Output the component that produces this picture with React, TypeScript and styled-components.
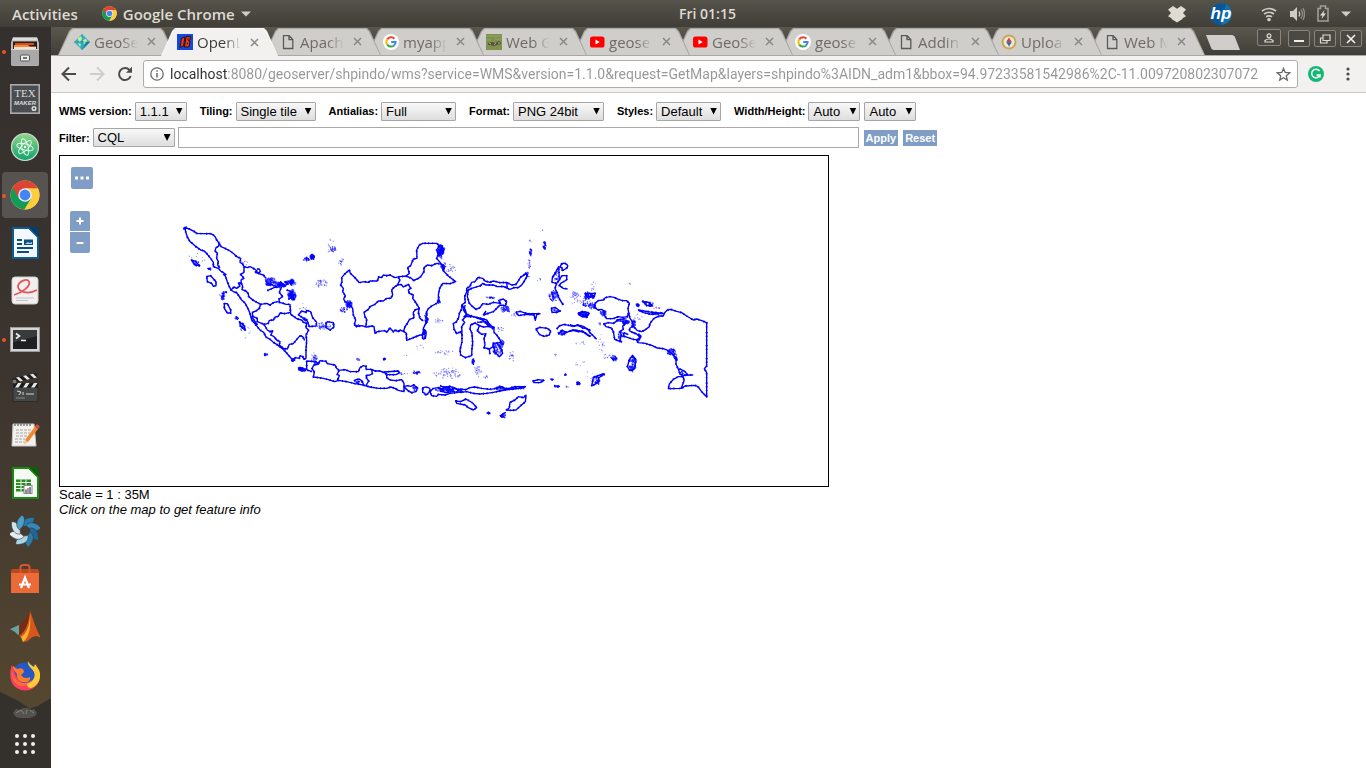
import React from "react";
import styled, { createGlobalStyle, css } from "styled-components";

const UI_FONT = '"Open Sans", "Noto Sans", sans-serif';
const PAGE_FONT = '"Liberation Sans", Arial, sans-serif';

const GlobalStyle = createGlobalStyle`
  *, *::before, *::after { box-sizing: border-box; }
  body { margin: 0; background: #fff; color: #000; font-family: ${PAGE_FONT}; font-size: 13px; }
  button { border: 0; padding: 0; background: none; color: inherit; font: inherit; }
  svg { display: block; flex: none; }
`;

/* ---------- desktop shell ---------- */

const Desktop = styled.div`
  display: flex;
  flex-direction: column;
  min-height: 100vh;
`;

const TopBar = styled.header`
  display: grid;
  grid-template-columns: 1fr auto 1fr;
  align-items: center;
  height: 27px;
  padding: 0 15px 0 12px;
  background: linear-gradient(#56534a, #403e38);
  color: #dfdbd2;
  font: 600 15px/20px ${UI_FONT};
`;

const BarGroup = styled.div<{ $end?: boolean }>`
  display: flex;
  align-items: center;
  gap: 24px;
  justify-content: ${(p) => (p.$end ? "flex-end" : "flex-start")};
`;

const BarButton = styled.button`
  display: flex;
  align-items: center;
  gap: 6px;
`;

const Clock = styled(BarButton)`
  margin-left: 52px;
  font-size: 14px;
`;

const Tray = styled.div`
  display: flex;
  align-items: center;
  gap: 12px;
  margin-left: 5px;
`;

const Workspace = styled.div`
  display: flex;
  flex: 1;
`;

const Dock = styled.nav`
  position: relative;
  display: flex;
  flex-direction: column;
  align-items: center;
  width: 51px;
  padding-right: 1px;
  flex: none;
  background: linear-gradient(#34302d, #3b342f 45%, #4b3f30 75%, #54462f 90%);
  &::after {
    content: "";
    position: absolute;
    inset: auto 0 0 0;
    height: 76px;
    background: #34312d;
    clip-path: polygon(0 0, 34% 11%, 58% 22%, 75% 18%, 100% 8%, 100% 100%, 0 100%);
  }
`;

const DockButton = styled.button<{ $active?: boolean; $running?: boolean }>`
  position: relative;
  display: grid;
  place-items: center;
  width: 46px;
  height: 46px;
  margin: 1px 0;
  border-radius: 4px;
  background: ${(p) => (p.$active ? "#575350" : "transparent")};
  ${(p) =>
    p.$running &&
    css`
      &::before {
        content: "";
        position: absolute;
        left: 0;
        top: 22px;
        width: 4px;
        height: 4px;
        border-radius: 2px;
        background: #e95420;
      }
    `}
`;

const DockFoot = styled.div`
  position: relative;
  z-index: 1;
  display: flex;
  flex-direction: column;
  align-items: center;
  gap: 14px;
  padding-top: 8px;
`;

/* ---------- browser window ---------- */

const Browser = styled.div`
  flex: 1;
  min-width: 0;
  display: flex;
  flex-direction: column;
  background: #fff;
`;

const TabStrip = styled.div`
  display: flex;
  align-items: flex-start;
  height: 29px;
  padding: 0 4px 0 7px;
  background: linear-gradient(#5a574d, #403e39);
  border-bottom: 1px solid #a9a8a6;
`;

const TabList = styled.div`
  display: flex;
  flex: 0 1 1133px;
  min-width: 0;
  margin-right: 15px;
`;

const TabShape = styled.div<{ $active?: boolean; $level: number }>`
  position: relative;
  z-index: ${(p) => (p.$active ? 20 : p.$level)};
  display: flex;
  align-items: center;
  flex: 0 1 117px;
  height: ${(p) => (p.$active ? 29 : 28)}px;
  min-width: 0;
  margin-right: -14px;
  padding: 1px 19px 0 16px;
  color: ${(p) => (p.$active ? "#3c3c3c" : "#6d6a67")};
  &::before,
  &::after {
    content: "";
    position: absolute;
    z-index: -1;
    inset: 1px 0 0 0;
    background: ${(p) => (p.$active ? "#f8f7f6" : "#a9a7a4")};
    clip-path: polygon(0 100%, 11px 3px, 14px 0, calc(100% - 14px) 0, calc(100% - 11px) 3px, 100% 100%);
  }
  &::after {
    inset: 2px 1px 0 1px;
    background: ${(p) => (p.$active ? "#f2f1f0" : "#d0cecb")};
  }
`;

const TabTitle = styled.button`
  flex: 1;
  min-width: 0;
  display: flex;
  align-items: center;
  gap: 4px;
  font: 15px/20px ${UI_FONT};
  white-space: nowrap;
`;

const FadeText = styled.span`
  flex: 1;
  min-width: 0;
  text-align: left;
  overflow: hidden;
  mask-image: linear-gradient(to right, #000 60%, transparent 98%);
`;

const TabClose = styled.button`
  margin-left: 8px;
  color: #8b8987;
`;

const NewTab = styled.button`
  width: 34px;
  height: 15px;
  margin-top: 8px;
  background: #d0cecb;
  clip-path: polygon(0 0, 78% 0, 84% 8%, 100% 100%, 22% 100%, 16% 92%);
`;

const WindowButtons = styled.div`
  display: flex;
  align-items: flex-start;
  gap: 4px;
  margin-left: auto;
`;

const WindowButton = styled.button<{ $profile?: boolean }>`
  display: grid;
  place-items: center;
  width: ${(p) => (p.$profile ? 24 : 22)}px;
  height: 17px;
  margin: ${(p) => (p.$profile ? "2px 3px 0 0" : "3px 0 0 0")};
  border: 1px solid #88857c;
  border-radius: 2px;
  background: #4b4943;
`;

const NavBar = styled.div`
  display: flex;
  align-items: center;
  gap: 12px;
  height: 37px;
  padding: 0 10px;
  background: #f2f1f0;
  border-bottom: 1px solid #cccbca;
  color: #4b4b4b;
`;

const NavButton = styled.button<{ $spaced?: boolean }>`
  width: 16px;
  height: 16px;
  margin-left: ${(p) => (p.$spaced ? 4 : 0)}px;
`;

const Omnibox = styled.div`
  display: flex;
  align-items: center;
  gap: 6px;
  flex: 1;
  min-width: 0;
  height: 28px;
  margin: 0 -2px;
  padding: 0 6px;
  background: #fff;
  border: 1px solid #aeadab;
  border-radius: 3px;
  color: #6a6a6a;
`;

const UrlInput = styled.input`
  flex: 1;
  min-width: 0;
  height: 22px;
  border: 0;
  padding: 0;
  outline: 0;
  font: 14px/22px Roboto, ${UI_FONT};
  color: transparent;
  background: linear-gradient(to right, #2f2f2f 58px, #969696 58px);
  background-clip: text;
`;

/* ---------- WMS preview page ---------- */

const Preview = styled.main`
  padding: 8px;
`;

const OptionRow = styled.div`
  display: flex;
  flex-wrap: wrap;
  align-items: center;
  gap: 4px 13px;
  min-height: 20px;
`;

const FilterRow = styled.div`
  display: flex;
  align-items: center;
  gap: 3px;
  height: 21px;
  margin: 6px 0 7px;
`;

const Field = styled.div`
  display: flex;
  align-items: center;
  gap: 3px;
`;

const Label = styled.label`
  font-size: 11px;
  font-weight: bold;
  line-height: 16px;
  white-space: nowrap;
`;

const SelectBox = styled.span<{ $w: number }>`
  position: relative;
  display: block;
  width: ${(p) => p.$w}px;
  & + & { margin-left: 1px; }
  &::after {
    content: "";
    position: absolute;
    right: 4px;
    top: 6px;
    width: 7px;
    height: 7px;
    background: #000;
    clip-path: polygon(0 0, 100% 0, 50% 100%);
    pointer-events: none;
  }
  select {
    appearance: none;
    display: block;
    width: 100%;
    height: 19px;
    padding: 0 0 0 4px;
    border: 1px solid #a6a6a6;
    border-radius: 1px;
    background: linear-gradient(#f8f8f8, #dedede);
    color: #000;
    font: 13px/17px ${PAGE_FONT};
  }
`;

const FilterInput = styled.input`
  flex: 0 1 681px;
  min-width: 0;
  height: 21px;
  padding: 1px 4px;
  border: 1px solid #a9a9a9;
  font: 13px ${PAGE_FONT};
`;

const ActionButton = styled.button`
  height: 16px;
  margin-left: 2px;
  padding: 0 2px;
  background: #7f9dc5;
  color: #fff;
  font: bold 11px/16px ${PAGE_FONT};
`;

const MapFrame = styled.div`
  position: relative;
  max-width: 770px;
  border: 1px solid #000;
  svg { width: 100%; height: auto; }
`;

const MapTools = styled.div`
  position: absolute;
  left: 10px;
  top: 11px;
  display: flex;
  flex-direction: column;
  gap: 1px;
`;

const MapButton = styled.button<{ $menu?: boolean; $edge?: "top" | "bottom" }>`
  display: grid;
  place-items: center;
  width: ${(p) => (p.$menu ? 22 : 20)}px;
  height: ${(p) => (p.$menu ? 22 : p.$edge === "top" ? 20 : 21)}px;
  margin: ${(p) => (p.$menu ? "0 0 21px 1px" : "0")};
  border-radius: ${(p) => (p.$edge === "top" ? "2px 2px 0 0" : p.$edge === "bottom" ? "0 0 2px 2px" : "2px")};
  background: #7f9dc5;
  svg { width: 16px; height: 16px; }
`;

const Status = styled.div<{ $italic?: boolean }>`
  font-size: 13px;
  line-height: 15px;
  font-style: ${(p) => (p.$italic ? "italic" : "normal")};
`;

/* ---------- favicons ---------- */

const PageIcon = () => (
  <svg width="16" height="16" viewBox="0 0 16 16" fill="none" stroke="#5c5a58" strokeWidth="1.3">
    <path d="M3.5 1.7h5.6l3.7 3.8v9H3.5zM9 1.7v4h3.8" />
  </svg>
);

const GoogleIcon = () => (
  <svg width="16" height="16" viewBox="0 0 16 16">
    <circle cx="8" cy="8" r="8" fill="#fff" />
    <g fill="none" strokeWidth="2">
      <path d="M4.2 5.4A4.6 4.6 0 0 1 11.4 4.7" stroke="#ea4335" />
      <path d="M4.2 5.4A4.7 4.7 0 0 0 4.2 10.6" stroke="#fbbc05" />
      <path d="M4.2 10.6A4.6 4.6 0 0 0 11 11.5" stroke="#34a853" />
      <path d="M11 11.5A4.6 4.6 0 0 0 12.6 8H8.2" stroke="#4285f4" />
    </g>
  </svg>
);

const YoutubeIcon = () => (
  <svg width="16" height="16" viewBox="0 0 16 16">
    <rect x="1" y="2.5" width="14.5" height="11" rx="2.6" fill="#f00" />
    <path d="M6.5 5.6v4.8L10.7 8z" fill="#fff" />
  </svg>
);

const GeoServerIcon = () => (
  <svg width="16" height="16" viewBox="0 0 16 16">
    <path d="M8 0l8 8-8 8-8-8z" fill="#35b3c6" />
    <path d="M3.500 4.500l4-2.500 1 3-3 3zM9 6l3-1 2 4-4 1zM4 9l3 1-1 3z" fill="#d4ec8f" />
    <path d="M8 0v16M0 8h16" stroke="#1788a8" strokeWidth=".5" />
    <path d="M8 16l8-8h-4z" fill="#128099" />
  </svg>
);

const OpenLayersIcon = () => (
  <svg width="16" height="16" viewBox="0 0 16 16">
    <rect width="16" height="16" fill="#1447e0" />
    <path d="M4.500 4l3.500-1-1.500 9L3 13.500zM9 2.500h4.500L13 6l-1.500.5L13 7.500l-1 5.500H7.500z" fill="#f4340f" stroke="#111" strokeWidth=".9" />
    <path d="M10.500 5h1M10 9.500h1" stroke="#111" strokeWidth="1.300" />
  </svg>
);

const PhotoIcon = () => (
  <svg width="16" height="16" viewBox="0 0 16 16">
    <rect width="16" height="16" fill="#7e9150" />
    <path d="M0 2h16M0 6h5m4-1h7" stroke="#8d9f5c" strokeWidth="1.500" />
    <path d="M2 9l4-1 3 1 4-2 2 2v1l-4 1-3 1-4-1H2z" fill="#5a5434" />
    <path d="M3 9l2 1m3 1l2-2m2 0h2" stroke="#b0a884" />
  </svg>
);

const CompassIcon = () => (
  <svg width="16" height="16" viewBox="0 0 16 16">
    <circle cx="8" cy="8" r="7.500" fill="#cfa55a" />
    <circle cx="8" cy="8" r="5.500" fill="#efe6d6" />
    <circle cx="8" cy="8" r="2.500" fill="#4a78b8" />
    <path d="M8 3.500l2 3.500H6z" fill="#d3452d" />
    <path d="M8 13l1.500-4h-3z" fill="#2f62ad" />
    <circle cx="8" cy="7.500" r="1.200" fill="#d3452d" />
  </svg>
);

const ChromeIcon = ({ size }: { size: number }) => (
  <svg width={size} height={size} viewBox="0 0 30 30">
    <circle cx="15" cy="15" r="14.500" fill="#ffcd40" />
    <path d="M15 15L2.500 7.700A14.500 14.500 0 0 0 14.500 29.500L21.500 18.500z" fill="#109d58" />
    <path d="M2.600 7.500A14.500 14.500 0 0 1 28 8.500H15L9 18.500z" fill="#db4437" />
    <path d="M15 8.500h13A14.500 14.500 0 0 1 14.500 29.500l6.500-11z" fill="#ffcd40" />
    <circle cx="15" cy="15" r="6.800" fill="#f1f1f1" />
    <circle cx="15" cy="15" r="5.400" fill="#4285f4" />
  </svg>
);

const CloseIcon = () => (
  <svg width="9" height="9" viewBox="0 0 9 9" stroke="currentColor" strokeWidth="1.500">
    <path d="M1 1l7 7M8 1L1 8" />
  </svg>
);

const CaretIcon = () => (
  <svg width="10" height="6" viewBox="0 0 10 6" fill="#cfccc4">
    <path d="M0 .5h10L5 5.500z" />
  </svg>
);

/* ---------- dock icons ---------- */

const petalColors = ["#2679ad", "#3489ba", "#1f6798", "#2b7bab", "#a9d4e8", "#e2edf2", "#cfe3ee", "#4b9dc8"];

const dockItems: { name: string; art: React.ReactNode; active?: boolean; running?: boolean }[] = [
  {
    name: "Files",
    running: true,
    art: (
      <>
        <path d="M3 1.500h24l2 5V28q0 2-2 2H3q-2 0-2-2V6.500z" fill="#b9b9b9" />
        <path d="M3 1.500h24l1 3H2z" fill="#dcdcdc" />
        <rect x="3" y="5.500" width="24" height="8" fill="#2a1b14" />
        <path d="M5 7h19v2H5z" fill="#d4501e" />
        <path d="M4 9h14l2 1.500h6V13H4z" fill="#f58a3c" />
        <path d="M4 11h22v2H4z" fill="#f8e3cf" />
        <rect x="1" y="13" width="28" height="16.500" rx="1" fill="#a9a9a9" />
        <path d="M1 13.500h28" stroke="#d8d8d8" />
        <rect x="10.500" y="19" width="9" height="6" rx="1" fill="#eee" stroke="#555" />
        <path d="M13 22h4" stroke="#444" strokeWidth="1.500" />
      </>
    ),
  },
  {
    name: "Texmaker",
    art: (
      <>
        <rect x=".8" y=".8" width="28.400" height="28.400" fill="#4a4d50" stroke="#a8abad" strokeWidth="1.600" />
        <g fill="#d9dbdc" fontFamily="Liberation Serif, serif">
          <text x="15" y="13" fontSize="11" textAnchor="middle">TEX</text>
          <text x="15" y="21" fontSize="6" textAnchor="middle" fontWeight="bold" fontStyle="italic" fontFamily="Liberation Sans, sans-serif">MAKER</text>
        </g>
        <circle cx="24" cy="24.500" r="1.800" fill="none" stroke="#dedede" strokeWidth="1.500" />
      </>
    ),
  },
  {
    name: "Atom",
    art: (
      <>
        <defs>
          <linearGradient id="atom" x1="0" y1="0" x2="0" y2="1">
            <stop offset="0" stopColor="#8fd68a" />
            <stop offset="1" stopColor="#0fa36e" />
          </linearGradient>
        </defs>
        <circle cx="15" cy="15" r="13.500" fill="url(#atom)" stroke="#d4d8d2" strokeWidth="1.200" />
        <g fill="none" stroke="#e6f7ea" strokeWidth="1">
          <ellipse cx="15" cy="15" rx="8.500" ry="3.200" transform="rotate(15 15 15)" />
          <ellipse cx="15" cy="15" rx="8.500" ry="3.200" transform="rotate(75 15 15)" />
          <ellipse cx="15" cy="15" rx="8.500" ry="3.200" transform="rotate(135 15 15)" />
        </g>
        <circle cx="15" cy="15" r="1.200" fill="#fff" />
      </>
    ),
  },
  { name: "Google Chrome", active: true, running: true, art: null },
  {
    name: "LibreOffice Writer",
    art: (
      <>
        <path d="M3 0h16l9 9v21H3z" fill="#f4f8fa" stroke="#0b5c94" strokeWidth="2" />
        <path d="M19-1h9.500v10z" fill="#093d63" />
        <path d="M7 12h5M7 16h5M7 20h16M7 24h12" stroke="#0b4f80" strokeWidth="2" />
        <rect x="14" y="11.500" width="9" height="5.500" fill="#0b4f80" />
        <path d="M15 16l3-2 2 1 2-1v2z" fill="#9ed0ee" />
      </>
    ),
  },
  {
    name: "Document Viewer",
    art: (
      <>
        <rect x="2" y="1" width="26" height="27" rx="3" fill="#f1f0ef" stroke="#cfcecd" />
        <path d="M4 19C12 17 21 10 19 5.500 17 2 9 5 8 10c0 6 10 9 19 4" fill="none" stroke="#e0575a" strokeWidth="1.800" />
        <path d="M6 22h18M6 24.500h12" stroke="#c4c4c4" />
      </>
    ),
  },
  {
    name: "Terminal",
    running: true,
    art: (
      <>
        <rect x=".5" y="3.500" width="29" height="24" fill="#d4d4d4" stroke="#9c9c9c" />
        <rect x="3" y="6" width="24" height="19" fill="#1f2021" />
        <path d="M3 6h24v6L3 18.500z" fill="#383a3b" />
        <path d="M6 9.500l3.500 2.500L6 14.500M11 16.500h5" fill="none" stroke="#f0f0f0" strokeWidth="1.600" />
      </>
    ),
  },
  {
    name: "Video Editor",
    art: (
      <>
        <rect x="3" y="15" width="25" height="14.500" rx="1" fill="#454646" stroke="#2a2a2a" />
        <path d="M2 6.500L26.500 1l1 4.500L3 11z" fill="#1d1d1d" />
        <path d="M6 5.600l4 3.800 3-.7-4-3.800zM13 4l4 3.800 3-.7-4-3.800zM20 2.500l4 3.800 3-.7-4-3.800z" fill="#e8e8e8" />
        <rect x="3" y="11" width="25" height="4.500" fill="#1d1d1d" />
        <path d="M8 11h3.500l-3 4.500H5zM16 11h3.500l-3 4.500H13zM24 11h3.500l-3 4.500H21z" fill="#e8e8e8" />
        <path d="M7 19l4 1-2 3m4-3v3m3-1h8" stroke="#d6d6d6" fill="none" />
        <path d="M6 26h9" stroke="#888" />
        <circle cx="4.500" cy="9.500" r="2" fill="#777" />
      </>
    ),
  },
  {
    name: "Text Editor",
    art: (
      <>
        <path d="M3 4h21l2 22H2z" fill="#f2f1ee" stroke="#c9c7c2" />
        <path d="M5 3v3m3-3v3m3-3v3m3-3v3m3-3v3m3-3v3" stroke="#767676" strokeWidth="1.400" />
        <path d="M6 10h16M6 13h14M6 16h12M5 19h10M5 22h9" stroke="#a6a6a6" strokeDasharray="3 1" />
        <path d="M15 20l-1 4 4-2L28 9l-3-2.500z" fill="#f0882f" />
        <path d="M25 6.500L28 9l2-2.500-3-2.500z" fill="#d8484c" />
        <path d="M15 20l-1 4 4-2z" fill="#ecd3a6" />
      </>
    ),
  },
  {
    name: "LibreOffice Calc",
    art: (
      <>
        <path d="M3 0h16l9 9v21H3z" fill="#f5faf3" stroke="#188a12" strokeWidth="2" />
        <path d="M19-1h9.500v10z" fill="#0e5c0b" />
        <path d="M6 11.500h15v12H6z" fill="#2b8a22" />
        <path d="M6 14.500h15M6 17.500h15M6 20.500h15M11 11.500v12M16 11.500v12" stroke="#e8f5e4" />
        <rect x="14" y="17.500" width="8" height="8" fill="#fff" stroke="#888" />
        <path d="M16 25v-3.500m4 3.500v-6" stroke="#2a72b5" strokeWidth="1.500" />
        <path d="M18 25v-5" stroke="#e2642a" strokeWidth="1.500" />
      </>
    ),
  },
  {
    name: "Shotwell",
    art: (
      <>
        {petalColors.map((color, i) => (
          <path
            key={color}
            d="M12 10.500C11 5 16 1 24 1.500 25 5 22 8.500 17 10z"
            fill={color}
            stroke="#3f3a33"
            strokeWidth=".6"
            transform={`rotate(${i * 45} 15 15)`}
          />
        ))}
        <circle cx="15" cy="15" r="4" fill="#463b30" />
      </>
    ),
  },
  {
    name: "Ubuntu Software",
    art: (
      <>
        <path d="M2 5h26l1 4v20H1V9z" fill="#ec6a38" />
        <path d="M2 5h26l1 4H1z" fill="#b94a20" />
        <path d="M10.500 9V3.500Q10.500 1 13 1h4q2.500 0 2.500 2.500V9" fill="none" stroke="#d4572a" strokeWidth="2" />
        <path d="M11 24l4-10.500L19 24M9 20.500h12" fill="none" stroke="#fff" strokeWidth="2.200" />
      </>
    ),
  },
  {
    name: "MATLAB",
    art: (
      <>
        <path d="M0 17l9-4 4-1 4-4-4 11-5 4-3-3z" fill="#63a69f" />
        <path d="M9 13c5-2 8-8 11-13 0 8-4 16-8 22l-3 1z" fill="#7a2a16" />
        <path d="M20-1c3 8 6 18 11 27-5-3-8-2-11 1-2 2-4 3-7 3 0-3-2-5-4-6 7-4 10-14 11-25z" fill="#d8551b" />
        <path d="M20 2c0 10-3 20-9 23l2 5c7-5 8-17 7-28z" fill="#f6b42c" />
      </>
    ),
  },
  {
    name: "Firefox",
    art: (
      <>
        <circle cx="15" cy="16" r="13.500" fill="#2558c4" />
        <path d="M3 6c2 1 3 3 5 3 4-2 6 1 6 3l-3 3c2 3 5 4 9 2 1 4-3 6-7 5-5 0-7-5-6-8L3 9z" fill="#ff7b2b" />
        <path d="M2 5C-2 15 0 30 15 30.500c8 0 13-5 14.500-11-7 6-20 7-24-5z" fill="#fb3f62" />
        <path d="M2 10c2 13 13 16 20 10-2 5-7 7-12 6C4 24 1 18 2 10z" fill="#ff6a36" />
        <path d="M18 1c-1 5 4 7 6 11 2 5-1 10-7 12 0 3 2 4 4 4 7-2 10-9 9-15-1-4-3-6-5-9l-1 3c-2-1-5-3-6-6z" fill="#ffc938" />
      </>
    ),
  },
];

/* ---------- map drawing ---------- */

/** Scatters n small islets inside an ellipse; the seed keeps them stable between renders. */
function islets(cx: number, cy: number, rx: number, ry: number, n: number, size = 3): string {
  let seed = Math.round(cx * 7919 + cy * 104729 + n);
  const next = () => {
    seed = (seed + 0x6d2b79f5) | 0;
    let t = Math.imul(seed ^ (seed >>> 15), 1 | seed);
    t = (t + Math.imul(t ^ (t >>> 7), 61 | t)) ^ t;
    return ((t ^ (t >>> 14)) >>> 0) / 4294967296;
  };
  let d = "";
  for (let i = 0; i < n; i++) {
    const angle = next() * Math.PI * 2;
    const reach = Math.pow(next(), 0.6);
    const x = cx + rx * reach * Math.cos(angle);
    const y = cy + ry * reach * Math.sin(angle);
    const s = size * (0.5 + next() * 0.7);
    d += `M${x.toFixed(0)} ${y.toFixed(0)}l${s.toFixed(0)} 1l-1 ${s.toFixed(0)}z`;
  }
  return d;
}

const regions: { at: string; coast: string; dense: string; faint: string }[] = [
  {
    at: "translate(110 59) scale(0.333333)",
    coast:
      "M45 38L58 42 72 49 80 55 95 56 122 56 130 60 136 66 140 75 148 85 153 95 165 100 180 108 192 117 200 125 212 130 210 142 218 147 222 155 232 158 240 155 250 160 258 165 264 175 280 180 288 190" +
      "M45 38L47 50 52 66 60 80 68 86 78 95 92 105 103 108 112 118 122 130 130 142 130 155 145 160 152 168 162 174 168 188 172 200 178 215 183 225 192 231 200 233 207 243 215 255 225 264 232 277 238 290 243 305 245 315 252 323 262 335 270 345 281 352 288 366 300 373 310 382 320 388 332 397 342 405 355 420 368 435 375 428 388 430 390 422 398 425 402 433 408 430 408 405 410 375 408 360 416 345 408 338 410 325 400 322 395 315 382 312 372 305 362 298 360 268 348 268 340 265 328 262 327 252 338 245 328 232 335 215" +
      "M148 85L145 94 138 98 135 108 142 114 140 130 145 140 143 150 150 158" +
      "M222 155L222 172 212 178 222 190 213 195 214 205 205 204 210 213 200 220 192 216 183 225" +
      "M214 205L218 214 216 224 228 228 235 236 236 245 250 256 272 268 268 280 258 288 247 292 248 304 262 310 262 320 282 328M272 268L290 265 300 270 312 262 325 260" +
      "M282 328L295 325 298 316 310 315 316 306 325 304 330 294 345 296 362 292M282 328L292 345 300 350 308 347 303 360 312 365 320 375 330 380 328 390 340 400 352 402 358 388 370 386 378 376 390 362 398 365 404 376" +
      "M243 305L250 312 262 330M262 163q6-4 8 3t-6 8-7-5M110 185L122 182 138 200 138 212 130 214 125 205 112 200zM163 266L172 266 182 285 182 294 172 294 163 280z" +
      "M385 300L395 288 408 292 410 286 422 290 428 308 440 322 438 333 418 335 412 318 398 308zM292 227L312 218 330 215M300 207L325 218M355 205L345 212 330 200M350 225L365 230 360 245M355 253L363 248" +
      "M64 135L78 140 88 152 76 150zM208 320L222 332 225 345 212 334z",
    dense:
      islets(45, 38, 6, 6, 10) + islets(76, 144, 13, 8, 14) + islets(116, 160, 6, 4, 14) + islets(160, 178, 7, 4, 8) +
      islets(155, 242, 7, 10, 24, 4) + islets(166, 230, 7, 2, 8) + islets(198, 308, 5, 5, 14) + islets(217, 334, 8, 12, 20) +
      islets(286, 417, 5, 4, 16) + islets(298, 198, 18, 12, 50, 5) + islets(328, 208, 16, 8, 40, 5) + islets(358, 200, 16, 7, 40, 5) +
      islets(365, 238, 13, 15, 44, 5) + islets(408, 130, 8, 5, 10) + islets(424, 124, 6, 7, 26, 4) + islets(405, 312, 8, 8, 14) +
      islets(368, 434, 6, 4, 16) + islets(390, 460, 7, 5, 24),
    faint:
      islets(95, 125, 45, 16, 8, 2) + islets(225, 140, 12, 8, 8, 2) + islets(455, 205, 18, 12, 20, 3) + islets(455, 330, 14, 10, 26, 3) +
      islets(235, 355, 16, 24, 5, 2) + islets(400, 275, 12, 12, 8, 2) + islets(476, 100, 4, 22, 7, 2) + islets(435, 430, 10, 12, 22, 3),
  },
  {
    at: "translate(230 69) scale(0.333333)",
    coast:
      "M178 135L181 145 195 158 208 173 222 170 235 172 240 168 262 168 266 156 275 158 280 150 290 152 300 150 315 158 330 155 348 153 358 145 353 128 362 122 366 112 370 102 381 100 380 75 388 60 398 55 440 55 448 62 440 75 445 88 440 100 455 118 465 125 458 135 475 153 497 170 480 176 458 175 449 190 445 210 447 225 440 235 425 243 414 252 408 265 410 290 400 310 403 328 390 330 350 346 349 325 342 320 330 315 325 320 315 315 310 320 300 309 290 322 285 317 262 320 255 325 252 305 245 303 230 306 215 302 200 305 193 298 197 285 190 270 188 250 178 240 165 230 161 222 166 212 158 200 160 190 152 180 156 170 155 158 165 146z" +
      "M325 158L330 165 322 180 312 187 305 195 308 210 302 220 290 220 280 228 265 228 255 238 240 245 235 253 222 262 225 275 230 283 228 303" +
      "M322 180L333 178 340 186 355 178 362 190 355 195 358 205 370 210 368 220 374 228 382 240 388 250 385 262 390 280 400 288" +
      "M388 250L375 255 370 262 372 278 358 284 352 295 345 305 340 320M348 153L365 160 370 167 385 160 392 155 402 140 402 128 412 120 425 122 440 115 455 118" +
      "M400 318Q408 310 408 325T402 342 398 325zM108 295L112 290 130 293 132 306 120 315 108 308z" +
      "M25 430L33 437 45 438 50 430 50 408 78 410 85 416 90 407 108 409 112 416 135 420 140 430 147 436 165 434 180 440 205 440 210 428 220 422 228 424 228 433 245 433 255 438 270 438 290 446 290 458 300 465 318 467 335 464 342 475 342 500 325 496 315 490 302 486 290 490 265 490 240 486 225 482 210 478 195 476 170 470 145 466 135 470 115 464 100 460 85 458 70 456 73 442 66 430 72 420 85 418" +
      "M147 436L142 448 148 452 142 466M245 433L247 446 240 450 228 452 230 460 236 468 228 482M192 468L198 464 208 462 216 468 222 482M283 441L325 438 329 443 318 449 290 449zM25 430L36 428 40 433M51 435L66 440" +
      "M342 485L352 482 362 484 372 480 382 490 378 500 365 503 355 498zM398 490Q405 484 415 488T416 503 405 508 398 502zM420 500L430 490 445 488 455 494 462 486 475 485 480 495 495 490 505 495 500 503 480 505 465 510 445 508 440 514 425 512z",
    dense:
      islets(449, 78, 9, 20, 80, 5) + islets(458, 122, 7, 12, 16, 4) + islets(174, 236, 9, 11, 40, 4) + islets(160, 252, 12, 10, 16) +
      islets(408, 278, 5, 16, 30) + islets(127, 70, 8, 8, 14, 4) + islets(65, 94, 6, 7, 26, 4) + islets(48, 102, 9, 5, 12) +
      islets(80, 414, 8, 5, 14) + islets(35, 432, 9, 4, 20) + islets(6, 210, 8, 14, 36, 5) + islets(5, 168, 6, 7, 20, 4) +
      islets(282, 401, 4, 3, 14) + islets(378, 441, 12, 5, 22) + islets(206, 470, 12, 5, 14) + islets(455, 492, 20, 6, 24, 4) +
      islets(375, 490, 9, 8, 14) + islets(445, 228, 4, 9, 14) + islets(402, 325, 4, 12, 16) + islets(200, 300, 9, 3, 8),
    faint:
      islets(122, 45, 8, 6, 4, 2) + islets(152, 108, 8, 12, 14) + islets(95, 172, 15, 12, 14, 2) + islets(95, 305, 20, 7, 20, 2) +
      islets(118, 300, 14, 12, 18, 2) + islets(204, 402, 10, 3, 14, 2) + islets(448, 286, 14, 7, 14, 2) + islets(480, 130, 18, 10, 12, 2) +
      islets(460, 380, 26, 7, 12, 2) + islets(470, 445, 40, 14, 34, 3) + islets(390, 365, 12, 10, 5, 2) + islets(345, 390, 4, 4, 2, 2) +
      islets(340, 445, 12, 4, 12, 2) + islets(70, 395, 8, 14, 14, 2),
  },
  {
    at: "translate(380 69) scale(0.333333)",
    coast:
      "M122 182L128 175 138 180 160 180 172 185 190 184 202 190 210 193 222 188 235 188 245 180 252 170 262 152 258 143 250 152 242 156 236 166 228 178 215 180 200 172 180 173 160 168 150 172 135 168 128 160 114 157 105 170 95 172 90 184 80 190 80 200 74 215 76 232 65 240 66 250 58 265 56 278 48 292 40 295 42 312 50 326 62 320 66 330 66 350 60 375 62 390 76 398 95 392 96 370 98 355 96 325 90 312 92 300 105 294 118 302 112 318 125 328 138 326 132 340 135 360 132 368 148 372 158 366 160 355 185 352 170 330 162 322 162 308 150 300 140 285 115 278 100 275 80 268 70 255 76 240" +
      "M66 240L76 255 80 270 68 285 74 292 65 305 66 330M80 268L72 275 100 275 128 285 145 302 160 312M122 182L95 190 85 195 82 215 88 235 98 245 108 253 120 248 128 236 145 238 160 232 182 235 176 226 190 222 200 230 196 242 180 240 168 252 160 260 130 270 138 258M118 302L130 306 150 304" +
      "M200 172L202 190M150 300L136 290 112 292" +
      "M345 145L356 125 358 165 350 175 336 172 337 158zM358 165L366 152 380 152 380 165 362 175 358 182 370 190 383 192M350 175L345 190 352 205 358 222 370 240M364 118Q372 112 380 118T376 132 366 134 360 126zM334 250L345 247 360 258 350 262 336 262z" +
      "M228 262L240 259 262 266 300 266 290 269 286 286 282 270 258 268 236 272zM288 312L300 307 322 310 332 318 328 330 312 334 298 328z" +
      "M350 312L358 303 372 298 400 304 412 300 430 304 440 312 452 316M355 328L366 316 380 322 398 315 412 320 428 318 442 330 452 334M415 265L435 260 448 265 440 275z" +
      "M0 482L15 488 30 484 50 492 78 494 90 488 105 486 125 490 150 493 170 490 180 484 200 492 225 485 255 485 240 490 220 492 195 495 180 498 160 502 140 505 120 507 100 505 80 500 60 502 40 500 20 503 0 498" +
      "M48 528L62 530 78 522 98 534 110 548 100 555 85 548 76 540 50 535zM200 555L208 548 210 532 225 525 235 515 250 518 258 511 256 530 242 542 228 555 212 556zM280 468L295 464 312 466 300 473 282 473zM342 482L360 484" +
      "M180 574L190 566 198 562M160 355L164 380 178 395 188 385 178 360M148 372L150 388",
    dense:
      islets(187, 571, 8, 5, 20, 4) + islets(145, 563, 5, 4, 16) + islets(98, 410, 3, 12, 24) + islets(170, 372, 16, 20, 40, 4) +
      islets(182, 355, 8, 12, 20, 4) + islets(194, 252, 13, 11, 28, 4) + islets(150, 216, 13, 4, 14) + islets(312, 60, 4, 11, 24, 4) +
      islets(270, 80, 4, 9, 16, 4) + islets(262, 148, 5, 7, 10) + islets(338, 212, 13, 16, 44, 4) + islets(365, 320, 12, 9, 26, 4) +
      islets(440, 212, 9, 12, 30, 4) + islets(435, 235, 8, 10, 16) + islets(345, 256, 8, 6, 10) + islets(20, 492, 24, 7, 40, 4) + islets(60, 495, 13, 5, 18) +
      islets(185, 490, 22, 6, 30, 4) + islets(230, 487, 22, 3, 20, 4) + islets(413, 474, 6, 4, 12) + islets(376, 448, 4, 4, 8) +
      islets(334, 462, 6, 2, 8) + islets(352, 483, 9, 2, 10) + islets(430, 267, 12, 5, 16) + islets(6, 70, 5, 12, 18, 4) + islets(348, 150, 8, 16, 14),
    faint:
      islets(268, 45, 8, 4, 4, 2) + islets(266, 120, 4, 20, 14) + islets(308, 15, 3, 3, 2, 2) + islets(298, 165, 9, 8, 5, 2) +
      islets(30, 440, 30, 14, 22, 2) + islets(112, 438, 11, 18, 18, 3) + islets(215, 392, 10, 15, 14, 3) + islets(20, 382, 20, 7, 10, 2) +
      islets(345, 388, 4, 3, 4, 2) + islets(405, 215, 16, 24, 20, 3) + islets(225, 268, 12, 5, 14, 2) + islets(35, 130, 14, 14, 12, 2) +
      islets(380, 484, 12, 3, 8, 2) + islets(135, 455, 12, 4, 6) + islets(180, 310, 12, 9, 14, 2) + islets(450, 450, 18, 16, 8, 2),
  },
  {
    at: "translate(510 104) scale(0.333333)",
    coast:
      "M75 130L85 122 100 120 106 113 120 110 132 112 145 118 158 122 170 122 178 130 174 145 176 158 172 170 158 172 145 170 130 176 110 176 102 165 104 155 95 148 84 150 74 142z" +
      "M176 158L180 175 188 186 190 198 202 212 215 215 225 210 238 200 240 190 252 175 268 168 280 168 284 158 292 150 302 148 320 154 335 158 350 168 370 180 380 177 395 182 410 188 410 318 403 326 410 338 410 410 395 395 384 380 375 376 345 378 335 385 295 386 298 372 310 358 325 350 340 350 342 362 334 384" +
      "M328 326L345 335 352 344 368 345 340 346 330 343 326 330 318 312 318 300 310 285 295 272 280 266 262 264 245 256 225 250 205 248 200 242 210 232 200 222 185 216 178 212 180 204 190 198M205 222L213 228 208 240 190 238 172 232 160 228 162 218 175 224" +
      "M102 192L115 188 130 190 142 182 160 184 168 190 158 198 160 208 150 214 154 226 150 240 155 246 134 238 130 215 124 204 108 200zM205 150L240 156 280 160 245 163 220 158zM218 124L238 128 248 138 230 136zM140 180L165 176" +
      "M0 195L12 198 25 196 38 204 52 206 58 216 64 222 80 238M0 213L18 210 30 214 45 218 60 230M26 160L36 154 48 160 52 172 36 170 26 164zM45 100L75 100 74 108 52 112zM65 378L70 352 90 345 102 342 86 354 84 368z" +
      "M178 300L188 286 198 300 194 326 180 332 172 320z",
    dense:
      islets(185, 310, 11, 22, 50, 4) + islets(130, 292, 9, 8, 26, 4) + islets(78, 358, 10, 12, 26, 4) + islets(23, 368, 5, 5, 18) +
      islets(60, 106, 14, 7, 30, 4) + islets(64, 136, 11, 10, 26, 4) + islets(98, 158, 9, 8, 20, 4) + islets(38, 162, 12, 6, 18) +
      islets(165, 182, 11, 9, 34, 4) + islets(188, 190, 6, 12, 20, 4) + islets(302, 274, 13, 9, 34, 4) + islets(314, 290, 6, 12, 20, 4) +
      islets(200, 133, 4, 4, 14, 4) + islets(235, 130, 14, 7, 20, 4) + islets(250, 158, 28, 4, 20) + islets(98, 342, 6, 3, 8) + islets(338, 338, 12, 8, 16) + islets(150, 225, 8, 14, 20),
    faint:
      islets(70, 78, 10, 14, 8, 2) + islets(14, 100, 8, 5, 10, 3) + islets(40, 120, 24, 18, 18, 2) + islets(96, 250, 12, 28, 16, 2) +
      islets(180, 70, 3, 4, 3, 2) + islets(200, 175, 16, 18, 10, 2) + islets(30, 250, 14, 8, 8, 2) + islets(110, 290, 12, 10, 10, 2) +
      islets(88, 190, 4, 4, 6, 3) + islets(30, 320, 18, 22, 6, 2) + islets(260, 142, 10, 4, 8, 2),
  },
];

const MapDrawing = () => (
  <svg viewBox="0 0 768 330" role="img" aria-label="Administrative boundaries of Indonesia">
    {regions.map((r) => (
      <g key={r.at} transform={r.at} fill="none" stroke="#00f" strokeLinejoin="round">
        <path d={r.coast} strokeWidth="4.200" />
        <path d={r.coast} strokeWidth="6" strokeDasharray="3 9 2 14 4 7" />
        <path d={r.dense} strokeWidth="1.500" />
        <path d={r.faint} strokeWidth="1.200" opacity=".65" />
      </g>
    ))}
  </svg>
);

/* ---------- data ---------- */

const tabs: { title: string; icon: React.ReactNode; active?: boolean }[] = [
  { title: "GeoSe", icon: <GeoServerIcon /> },
  { title: "OpenL", icon: <OpenLayersIcon />, active: true },
  { title: "Apach", icon: <PageIcon /> },
  { title: "myapp", icon: <GoogleIcon /> },
  { title: "Web G", icon: <PhotoIcon /> },
  { title: "geose", icon: <YoutubeIcon /> },
  { title: "GeoSe", icon: <YoutubeIcon /> },
  { title: "geose", icon: <GoogleIcon /> },
  { title: "Addin", icon: <PageIcon /> },
  { title: "Uploa", icon: <CompassIcon /> },
  { title: "Web M", icon: <PageIcon /> },
];

const options: { id: string; label: string; selects: { value: string; width: number }[] }[] = [
  { id: "version", label: "WMS version:", selects: [{ value: "1.1.1", width: 52 }] },
  { id: "tiling", label: "Tiling:", selects: [{ value: "Single tile", width: 80 }] },
  { id: "antialias", label: "Antialias:", selects: [{ value: "Full", width: 75 }] },
  { id: "format", label: "Format:", selects: [{ value: "PNG 24bit", width: 91 }] },
  { id: "styles", label: "Styles:", selects: [{ value: "Default", width: 65 }] },
  { id: "size", label: "Width/Height:", selects: [{ value: "Auto", width: 52 }, { value: "Auto", width: 52 }] },
];

const url =
  "localhost:8080/geoserver/shpindo/wms?service=WMS&version=1.1.0&request=GetMap&layers=shpindo%3AIDN_adm1&bbox=94.97233581542986%2C-11.009720802307072";

const Select = ({ id, value, width, label }: { id: string; value: string; width: number; label?: string }) => (
  <SelectBox $w={width}>
    <select id={id} aria-label={label}>
      <option>{value}</option>
    </select>
  </SelectBox>
);

/* ---------- sections ---------- */

const SystemBar = () => (
  <TopBar>
    <BarGroup>
      <BarButton>Activities</BarButton>
      <BarButton>
        <ChromeIcon size={15} />
        Google Chrome
        <CaretIcon />
      </BarButton>
    </BarGroup>
    <Clock>Fri 01:15</Clock>
    <BarGroup $end>
      <svg width="18" height="18" viewBox="0 0 18 18" fill="#dfdbd2">
        <path d="M5 1l4 2.700L13 1l5 3.500L15 8l3 3.300-3.500 2V14L9 17.500 3.500 14v-.700L0 11.300 3 8 0 4.500z" />
      </svg>
      <svg width="22" height="22" viewBox="0 0 22 22">
        <circle cx="11" cy="11" r="10.800" fill="#0b74b8" />
        <path d="M11 .2A10.800 10.800 0 0 0 11 21.800L16 .8z" fill="#0a569a" />
        <text x="11" y="16" textAnchor="middle" fill="#fff" fontFamily="Liberation Sans, sans-serif" fontSize="17" fontStyle="italic">hp</text>
      </svg>
      <Tray>
        <svg width="16" height="16" viewBox="0 0 16 16" fill="none" stroke="#cfccc4" strokeWidth="1.700">
          <path d="M1 5q7-5 14 0M3 8q5-3.500 10 0M5 10.800q3-2 6 0" />
          <circle cx="8" cy="13.500" r="1" fill="#cfccc4" />
        </svg>
        <svg width="16" height="16" viewBox="0 0 16 16" fill="none" strokeWidth="1.400">
          <path d="M1 5h3l4-4v14l-4-4H1z" fill="#cfccc4" />
          <path d="M10 5.500q1.500 2.500 0 5" stroke="#cfccc4" />
          <path d="M12 3.500q3 4.500 0 9M14 2q3 6 0 12" stroke="#8d8a82" />
        </svg>
        <svg width="12" height="17" viewBox="0 0 12 17" fill="none">
          <path d="M1 3.500h2.500V1h5v2.500H11V16H1z" stroke="#a19e96" strokeWidth="1.600" />
          <path d="M7.500 5L3 10.500h2.500L4.500 14 9 8.500H6.500z" fill="#dfdbd2" />
        </svg>
        <CaretIcon />
      </Tray>
    </BarGroup>
  </TopBar>
);

const Launcher = () => (
  <Dock aria-label="Launcher">
    {dockItems.map((item) => (
      <DockButton key={item.name} aria-label={item.name} $active={item.active} $running={item.running}>
        {item.art ? (
          <svg width="30" height="32" viewBox="0 -1 30 32">
            {item.art}
          </svg>
        ) : (
          <ChromeIcon size={30} />
        )}
      </DockButton>
    ))}
    <DockFoot>
      <svg width="26" height="12" viewBox="0 0 26 12">
        <path d="M1 6l3-4 4 1 3-2h5l3 2 3-1 3 4-2 3-5 2H8l-4-1z" fill="#55534f" />
        <path d="M4 6l5-3 3 4M15 3l-1 4m4-4l4 3" stroke="#85837f" fill="none" />
      </svg>
      <button aria-label="Show applications">
        <svg width="22" height="22" viewBox="0 0 22 22" fill="#f1f0ee">
          {[3, 11, 19].map((y) => [3, 11, 19].map((x) => <circle key={`${x}-${y}`} cx={x} cy={y} r="2" />))}
        </svg>
      </button>
    </DockFoot>
  </Dock>
);

const Tabs = () => (
  <TabStrip>
    <TabList>
      {tabs.map((t, i) => (
        <TabShape key={i} $active={t.active} $level={tabs.length - i}>
          <TabTitle>
            {t.icon}
            <FadeText>{t.title}</FadeText>
          </TabTitle>
          <TabClose aria-label="Close tab">
            <CloseIcon />
          </TabClose>
        </TabShape>
      ))}
    </TabList>
    <NewTab aria-label="New tab" />
    <WindowButtons>
      <WindowButton $profile aria-label="Profile">
        <svg width="10" height="10" viewBox="0 0 10 10" fill="none" stroke="#dfdbd2" strokeWidth="1.200">
          <circle cx="5" cy="2.800" r="1.900" />
          <path d="M1 9V7.500Q5 4.500 9 7.500V9z" />
        </svg>
      </WindowButton>
      <WindowButton aria-label="Minimize">
        <svg width="12" height="12" viewBox="0 0 12 12"><path d="M1 8h10" stroke="#f0eee8" strokeWidth="2" /></svg>
      </WindowButton>
      <WindowButton aria-label="Restore">
        <svg width="12" height="12" viewBox="0 0 12 12" fill="none" stroke="#dfdbd2" strokeWidth="1.200">
          <path d="M4 2h7v5.500H4zM4 5H1.500v5H8V7.500" />
        </svg>
      </WindowButton>
      <WindowButton aria-label="Close window">
        <svg width="10" height="10" viewBox="0 0 10 10"><path d="M1 1l8 8M9 1L1 9" stroke="#f0eee8" strokeWidth="1.700" /></svg>
      </WindowButton>
    </WindowButtons>
  </TabStrip>
);

const Navigation = () => (
  <NavBar>
    <NavButton aria-label="Back">
      <svg width="16" height="16" viewBox="0 0 16 16" fill="none" stroke="#4b4b4b" strokeWidth="2"><path d="M15 8H2M8 1.500L1.500 8 8 14.500" /></svg>
    </NavButton>
    <NavButton aria-label="Forward">
      <svg width="16" height="16" viewBox="0 0 16 16" fill="none" stroke="#cfcecd" strokeWidth="2"><path d="M1 8h13M8 1.500L14.500 8 8 14.500" /></svg>
    </NavButton>
    <NavButton aria-label="Reload">
      <svg width="16" height="16" viewBox="0 0 16 16" fill="none" stroke="#4b4b4b" strokeWidth="2">
        <path d="M13.700 10A6 6 0 1 1 12.500 4" />
        <path d="M15 .8V6.800H9z" fill="#4b4b4b" stroke="none" />
      </svg>
    </NavButton>
    <Omnibox>
      <svg width="14" height="14" viewBox="0 0 14 14" fill="none" stroke="#6a6a6a" strokeWidth="1.300">
        <circle cx="7" cy="7" r="6.200" />
        <path d="M7 6v4.500M7 3.300v1.500" strokeWidth="1.500" />
      </svg>
      <UrlInput aria-label="Address" defaultValue={url} spellCheck={false} />
      <svg width="15" height="15" viewBox="0 0 15 15" fill="none" stroke="#666" strokeWidth="1.300">
        <path d="M7.500 1.500l1.700 4 4.500.4-3.400 2.900 1 4.300-3.800-2.300-3.800 2.300 1-4.300L1.300 5.900l4.500-.4z" />
      </svg>
    </Omnibox>
    <NavButton aria-label="Grammarly">
      <svg width="16" height="16" viewBox="0 0 16 16" fill="none">
        <circle cx="8" cy="8" r="8" fill="#15b774" />
        <path d="M11.500 5A4.300 4.300 0 1 0 12 9H8.500M12 8.500V11.500" stroke="#fff" strokeWidth="1.500" />
      </svg>
    </NavButton>
    <NavButton $spaced aria-label="Menu">
      <svg width="16" height="16" viewBox="0 0 16 16" fill="#4b4b4b">
        <circle cx="8" cy="3" r="1.600" />
        <circle cx="8" cy="8" r="1.600" />
        <circle cx="8" cy="13" r="1.600" />
      </svg>
    </NavButton>
  </NavBar>
);

export default function App() {
  return (
    <Desktop>
      <GlobalStyle />
      <SystemBar />
      <Workspace>
        <Launcher />
        <Browser>
          <Tabs />
          <Navigation />
          <Preview>
            <OptionRow>
              {options.map((o) => (
                <Field key={o.id}>
                  <Label htmlFor={`${o.id}-0`}>{o.label}</Label>
                  {o.selects.map((s, i) => (
                    <Select key={i} id={`${o.id}-${i}`} value={s.value} width={s.width} label={i ? "Height" : undefined} />
                  ))}
                </Field>
              ))}
            </OptionRow>
            <FilterRow>
              <Label htmlFor="filter">Filter:</Label>
              <Select id="filter" value="CQL" width={82} />
              <FilterInput aria-label="Filter expression" />
              <ActionButton>Apply</ActionButton>
              <ActionButton>Reset</ActionButton>
            </FilterRow>
            <MapFrame>
              <MapDrawing />
              <MapTools>
                <MapButton $menu aria-label="Options">
                  <svg viewBox="0 0 16 16" fill="#fff"><path d="M1 6.500h3v3H1zM6.500 6.500h3v3h-3zM12 6.500h3v3h-3z" /></svg>
                </MapButton>
                <MapButton $edge="top" aria-label="Zoom in">
                  <svg viewBox="0 0 16 16" stroke="#fff" strokeWidth="2"><path d="M4.500 8h7M8 4.500v7" /></svg>
                </MapButton>
                <MapButton $edge="bottom" aria-label="Zoom out">
                  <svg viewBox="0 0 16 16" stroke="#fff" strokeWidth="2"><path d="M4.500 8h7" /></svg>
                </MapButton>
              </MapTools>
            </MapFrame>
            <Status>Scale = 1 : 35M</Status>
            <Status $italic>Click on the map to get feature info</Status>
          </Preview>
        </Browser>
      </Workspace>
    </Desktop>
  );
}
